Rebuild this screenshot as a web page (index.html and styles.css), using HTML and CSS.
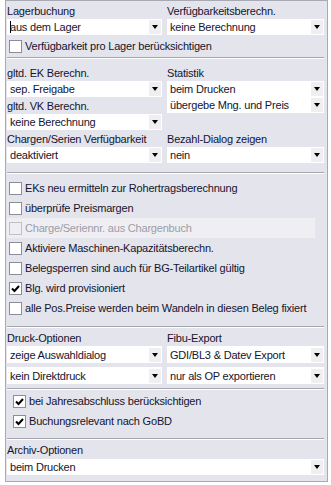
FILE: index.html
```html
<!DOCTYPE html>
<html lang="de">
<head>
    <meta charset="UTF-8">
    <title>Beleg-Optionen</title>
    <link rel="stylesheet" href="styles.css">
</head>
<body>
    <!-- Einstellungen fuer die Belegart -->
    <div class="panel">
        <div class="grid head">
            <div class="lbl">Lagerbuchung</div>
            <div class="lbl">Verfügbarkeitsberechn.</div>
            <div class="combo"><span class="val"><i class="caret"></i>aus dem Lager</span><span class="btn"></span></div>
            <div class="combo"><span class="val">keine Berechnung</span><span class="btn"></span></div>
        </div>
        <div class="chk first"><span class="box"></span>Verfügbarkeit pro Lager berücksichtigen</div>
        <div class="sep"></div>

        <div class="grid calc">
            <div class="lbl r1 c1">gltd. EK Berechn.</div>
            <div class="lbl r1 c2">Statistik</div>
            <div class="combo r2 c1"><span class="val">sep. Freigabe</span><span class="btn"></span></div>
            <div class="combo r2 c2"><span class="val">beim Drucken</span><span class="btn"></span></div>
            <div class="lbl r3 c1">gltd. VK Berechn.</div>
            <div class="combo r3 c2"><span class="val">übergebe Mng. und Preis</span><span class="btn"></span></div>
            <div class="combo r4 c1"><span class="val">keine Berechnung</span><span class="btn"></span></div>
            <div class="lbl r5 c1">Chargen/Serien Verfügbarkeit</div>
            <div class="lbl r5 c2">Bezahl-Dialog zeigen</div>
            <div class="combo r6 c1"><span class="val">deaktiviert</span><span class="btn"></span></div>
            <div class="combo r6 c2"><span class="val">nein</span><span class="btn"></span></div>
        </div>
        <div class="sep wide"></div>

        <div class="checks">
            <div class="chk"><span class="box"></span>EKs neu ermitteln zur Rohertragsberechnung</div>
            <div class="chk"><span class="box"></span>überprüfe Preismargen</div>
            <div class="chk disabled"><span class="box"></span>Charge/Seriennr. aus Chargenbuch</div>
            <div class="chk"><span class="box"></span>Aktiviere Maschinen-Kapazitätsberechn.</div>
            <div class="chk"><span class="box"></span>Belegsperren sind auch für BG-Teilartikel gültig</div>
            <div class="chk"><span class="box"><svg viewBox="0 0 11 11"><path d="M2 5.5 L4.5 8 L9 3"/></svg></span>Blg. wird provisioniert</div>
            <div class="chk"><span class="box"></span>alle Pos.Preise werden beim Wandeln in diesen Beleg fixiert</div>
        </div>
        <div class="sep wide"></div>

        <div class="grid export">
            <div class="lbl">Druck-Optionen</div>
            <div class="lbl">Fibu-Export</div>
            <div class="combo"><span class="val">zeige Auswahldialog</span><span class="btn"></span></div>
            <div class="combo"><span class="val">GDI/BL3 &amp; Datev Export</span><span class="btn"></span></div>
            <div class="combo low"><span class="val">kein Direktdruck</span><span class="btn"></span></div>
            <div class="combo low"><span class="val">nur als OP exportieren</span><span class="btn"></span></div>
        </div>
        <div class="sep"></div>

        <div class="checks indent">
            <div class="chk"><span class="box"><svg viewBox="0 0 11 11"><path d="M2 5.5 L4.5 8 L9 3"/></svg></span>bei Jahresabschluss berücksichtigen</div>
            <div class="chk"><span class="box"><svg viewBox="0 0 11 11"><path d="M2 5.5 L4.5 8 L9 3"/></svg></span>Buchungsrelevant nach GoBD</div>
        </div>
        <div class="sep"></div>

        <div class="archiv">
            <div class="lbl">Archiv-Optionen</div>
            <div class="combo"><span class="val">beim Drucken</span><span class="btn"></span></div>
        </div>
    </div>
</body>
</html>
```

FILE: styles.css
```css
body {
    margin: 0;
    background-color: #fff;
    font-family: "Liberation Sans", Arial, sans-serif;
    font-size: 11px;
    letter-spacing: -0.2px;
    color: #14142e;
}

.panel {
    box-sizing: border-box;
    width: 323px;
    height: 482px;
    margin-left: 5px;
    padding: 3px 3px 0 1px;
    background-color: #e4e4ec;
    border: 1px solid #a9a9b6;
}

.grid {
    display: grid;
    grid-template-columns: 155px 1fr;
    column-gap: 5px;
}

.lbl {
    height: 15px;
    line-height: 15px;
    white-space: nowrap;
}

.combo {
    box-sizing: border-box;
    display: flex;
    align-items: center;
    height: 16px;
    padding: 1px;
    background-color: #fff;
}

.val {
    flex: 1;
    padding-left: 2px;
    white-space: nowrap;
    overflow: hidden;
}

.caret {
    display: inline-block;
    width: 1px;
    height: 12px;
    margin-right: -1px;
    vertical-align: -2px;
    background-color: #000;
}

.btn {
    display: flex;
    align-items: center;
    justify-content: center;
    width: 12px;
    height: 14px;
    background-color: #efeff1;
}

.btn::after {
    content: "";
    border-top: 4px solid #000;
    border-left: 3.5px solid transparent;
    border-right: 3.5px solid transparent;
}

/* Checkboxen */
.chk {
    display: flex;
    align-items: center;
    gap: 3px;
    height: 20px;
    padding-left: 2px;
    white-space: nowrap;
}

.chk.first {
    margin-top: 1px;
}

.box {
    box-sizing: border-box;
    width: 13px;
    height: 13px;
    background-color: #fff;
    border: 1px solid #8d8d9a;
}

.box svg {
    display: block;
    width: 11px;
    height: 11px;
}

.box path {
    fill: none;
    stroke: #000;
    stroke-width: 2;
}

.chk.disabled {
    width: 306px;
    color: #9c9ca6;
    background-color: #efeff3;
}

.chk.disabled .box {
    background-color: #efeff3;
    border-color: #c0c0c8;
}

.sep {
    height: 1px;
    margin: 1px 0 0;
    background-color: #a6a6ae;
    border-bottom: 1px solid #fff;
}

.calc {
    margin-top: 6px;
    grid-template-rows: 16px 16px 17px 16px 17px 16px;
}

.calc .lbl {
    align-self: end;
}

.r1 { grid-row: 1; }
.r2 { grid-row: 2; }
.r3 { grid-row: 3; }
.r4 { grid-row: 4; }
.r5 { grid-row: 5; }
.r6 { grid-row: 6; }
.c1 { grid-column: 1; }
.c2 { grid-column: 2; }

.calc + .sep {
    margin-top: 9px;
}

.checks {
    margin-top: 4px;
}

.checks + .sep {
    margin-top: 8px;
}

.export {
    margin-top: 2px;
}

.export .lbl {
    height: 16px;
    line-height: 16px;
}

.export .combo {
    height: 17px;
}

.export .low {
    margin-top: 4px;
}

.export + .sep {
    margin-top: 4px;
}

.indent {
    margin-top: 1px;
    padding-left: 4px;
}

.indent + .sep {
    margin-top: 7px;
}

.archiv {
    margin-top: 2px;
}

.archiv .lbl {
    height: 17px;
    line-height: 17px;
}
```
